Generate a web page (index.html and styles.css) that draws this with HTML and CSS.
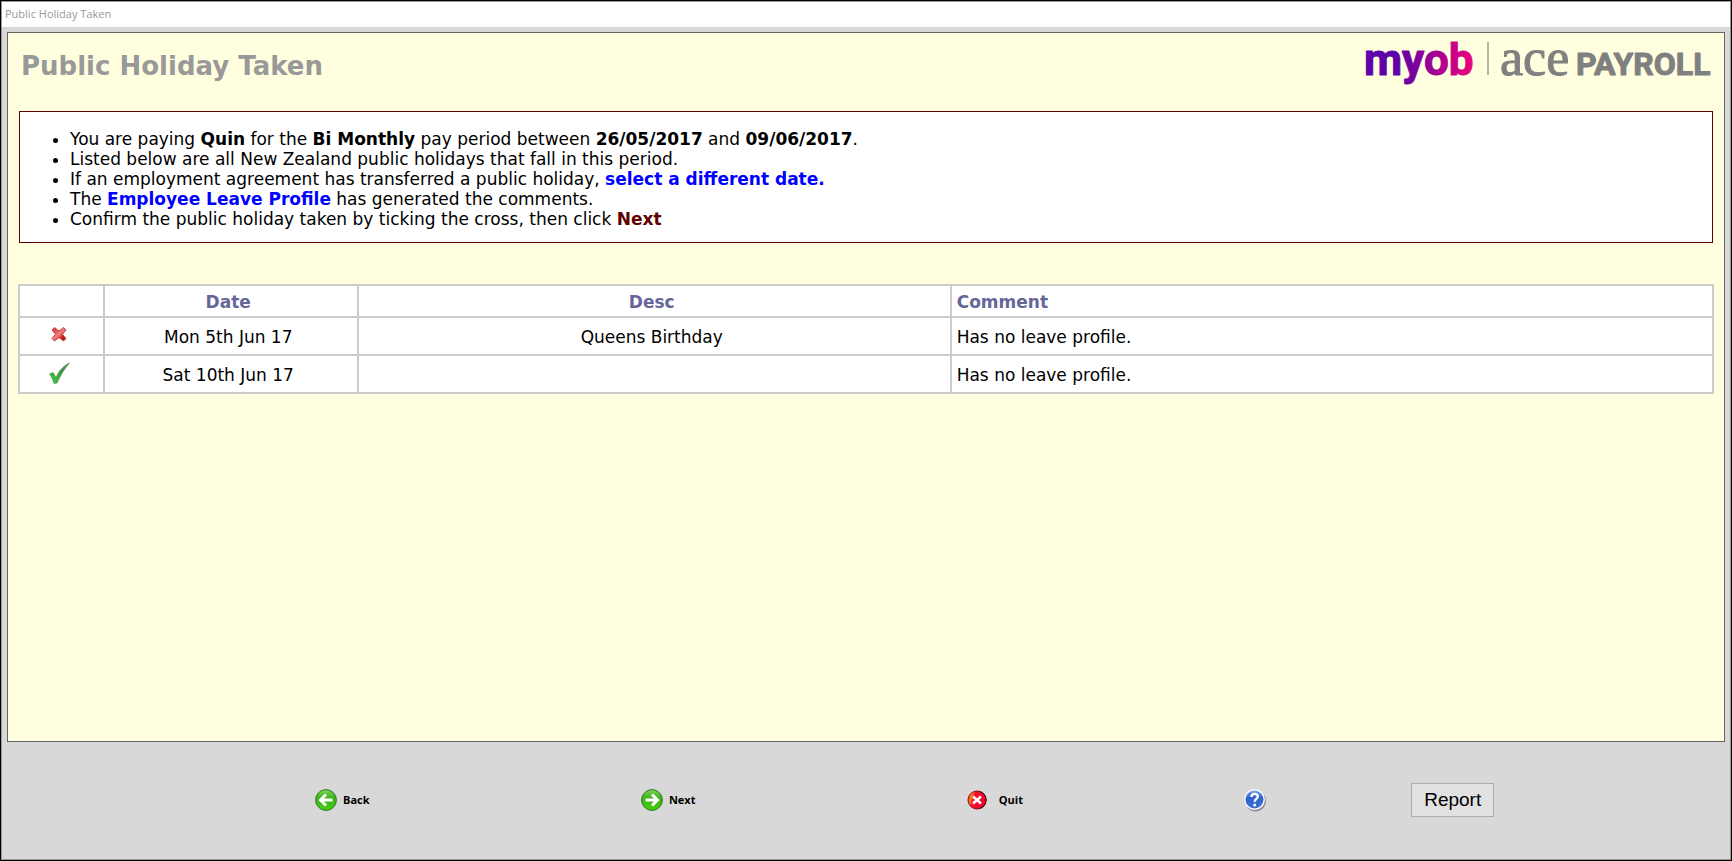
FILE: index.html
```
<!DOCTYPE html>
<html lang="en">

<head>
  <meta charset="UTF-8">
  <meta name="viewport" content="width=device-width, initial-scale=1.0">
  <title>Public Holiday Taken</title>

  <link rel="stylesheet" href="styles.css">
</head>

<body>
  <div class="window">
    <div class="titlebar">Public Holiday Taken</div>

    <main class="panel">
      <header class="page-header">
        <h1>Public Holiday Taken</h1>
        <svg class="logo" viewBox="0 0 350 48" role="img" aria-label="myob ace payroll">
          <defs>
            <linearGradient id="brand" gradientUnits="userSpaceOnUse" x1="0" y1="0" x2="112" y2="0">
              <stop offset="0.3" stop-color="#5f00a8" />
              <stop offset="0.6" stop-color="#9a0096" />
              <stop offset="1" stop-color="#f4007a" />
            </linearGradient>
          </defs>
          <text class="logo-myob" x="0" y="33">myob</text>
          <path d="M124 0v33" stroke="#b5b5a2" stroke-width="2" />
          <text class="logo-ace" x="136" y="33">ace</text>
          <text class="logo-payroll" x="212" y="33">PAYROLL</text>
        </svg>
      </header>

      <section class="notice">
        <ul>
          <li>You are paying <b>Quin</b> for the <b>Bi Monthly</b> pay period between <b>26/05/2017</b> and <b>09/06/2017</b>.</li>
          <li>Listed below are all New Zealand public holidays that fall in this period.</li>
          <li>If an employment agreement has transferred a public holiday, <a href="#date">select a different date.</a></li>
          <li>The <a href="#profile">Employee Leave Profile</a> has generated the comments.</li>
          <li>Confirm the public holiday taken by ticking the cross, then click <b class="next-word">Next</b></li>
        </ul>
      </section>

      <table class="holidays">
        <thead>
          <tr>
            <th class="col-tick"></th>
            <th class="col-date">Date</th>
            <th class="col-desc">Desc</th>
            <th class="col-comment">Comment</th>
          </tr>
        </thead>
        <tbody>
          <tr>
            <td>
              <button class="mark" aria-label="Not taken">
                <svg width="22" height="24" viewBox="0 0 22 24">
                  <defs>
                    <linearGradient id="cross" x1="0" y1="0" x2="1" y2="1">
                      <stop offset="0.2" stop-color="#e04848" />
                      <stop offset="0.5" stop-color="#ef8080" />
                      <stop offset="0.75" stop-color="#c81818" />
                    </linearGradient>
                  </defs>
                  <path d="M6.500 3.500L11 7L15.500 3.500L18 6L14.500 10.300L18 14.500L15.500 17L11 13.500L6.500 17L4 14.500L7.500 10.300L4 6Z" fill="url(#cross)" stroke="#c04848" stroke-linejoin="round" />
                </svg>
              </button>
            </td>
            <td>Mon 5th Jun 17</td>
            <td>Queens Birthday</td>
            <td class="comment">Has no leave profile.</td>
          </tr>
          <tr>
            <td>
              <button class="mark" aria-label="Taken">
                <svg width="22" height="24" viewBox="0 0 22 24">
                  <defs>
                    <linearGradient id="tick" x1="0" y1="1" x2="1" y2="0">
                      <stop offset="0.2" stop-color="#3cc038" />
                      <stop offset="0.6" stop-color="#3c9440" />
                      <stop offset="1" stop-color="#5a8a60" />
                    </linearGradient>
                  </defs>
                  <path d="M1.500 12L5 10.500L8 15.500C11 9 15 4 21.500 1C17 6 12.500 13 9 21L6 21.500C5 18 3.500 14.500 1.500 12Z" fill="url(#tick)" stroke="#3f8a44" stroke-width="0.600" />
                </svg>
              </button>
            </td>
            <td>Sat 10th Jun 17</td>
            <td></td>
            <td class="comment">Has no leave profile.</td>
          </tr>
        </tbody>
      </table>
    </main>

    <footer class="actions">
      <button class="action">
        <svg width="22" height="22" viewBox="0 0 22 22">
          <defs>
            <linearGradient id="green" x1="0" y1="0" x2="0" y2="1">
              <stop offset="0" stop-color="#7ed858" />
              <stop offset="0.4" stop-color="#3cb21c" />
              <stop offset="1" stop-color="#46d00c" />
            </linearGradient>
          </defs>
          <circle cx="11" cy="11" r="10.400" fill="url(#green)" stroke="#2a7a20" />
          <path d="M17.500 11H6M11 5.500L5.500 11L11 16.500" fill="none" stroke="#fff" stroke-width="3" />
        </svg>
        Back
      </button>
      <button class="action">
        <svg width="22" height="22" viewBox="0 0 22 22">
          <circle cx="11" cy="11" r="10.400" fill="url(#green)" stroke="#2a7a20" />
          <path d="M4.500 11H16M11 5.500L16.500 11L11 16.500" fill="none" stroke="#fff" stroke-width="3" />
        </svg>
        Next
      </button>
      <button class="action quit">
        <svg width="20" height="20" viewBox="0 0 20 20">
          <defs>
            <linearGradient id="red" x1="0" y1="0" x2="1" y2="0.300">
              <stop offset="0" stop-color="#e84000" />
              <stop offset="0.250" stop-color="#ff7a20" />
              <stop offset="0.400" stop-color="#f8102c" />
              <stop offset="1" stop-color="#f00030" />
            </linearGradient>
          </defs>
          <circle cx="10" cy="10" r="9" fill="url(#red)" stroke="#801008" />
          <path d="M13 1.500A9 9 0 0 1 13 18.500" fill="none" stroke="#300000" />
          <path d="M6 6.500L14 13.500M14 6.500L6 13.500" stroke="#fff" stroke-width="2.600" />
        </svg>
        Quit
      </button>
      <button class="action" aria-label="Help">
        <svg width="24" height="24" viewBox="0 0 24 24">
          <defs>
            <linearGradient id="blue" x1="0" y1="0" x2="0" y2="1">
              <stop offset="0" stop-color="#74a8ec" />
              <stop offset="0.400" stop-color="#2f62c8" />
              <stop offset="1" stop-color="#3a70e0" />
            </linearGradient>
          </defs>
          <circle cx="12.500" cy="13" r="10.500" fill="#8c8c90" />
          <circle cx="11.500" cy="11.500" r="10.500" fill="#f6f8fc" />
          <circle cx="11.500" cy="11.500" r="9" fill="url(#blue)" />
          <path d="M8.500 9C8.500 4.800 14.800 5 14.800 8.500C14.800 11 11.700 10.800 11.700 13.800" fill="none" stroke="#fff" stroke-width="2.400" />
          <circle cx="11.700" cy="17" r="1.500" fill="#fff" />
        </svg>
      </button>
      <button class="report">Report</button>
    </footer>
  </div>
</body>

</html>
```

FILE: styles.css
```
* {
  box-sizing: border-box;
}

body {
  background: #d8d8d8;
  font-family: Verdana, "DejaVu Sans", sans-serif;
  font-size: 17px;
  margin: 0;
}

button {
  cursor: pointer;
}

.window {
  border: 1px solid #000;
  box-shadow: inset 0 0 0 1px #999;
  display: flex;
  flex-direction: column;
  min-height: 100vh;
  padding: 1px;
}

.titlebar {
  background: #fff;
  color: #999;
  font-family: "Open Sans", sans-serif;
  font-size: 11px;
  height: 25px;
  line-height: 24px;
  padding-left: 3px;
}

.panel {
  background: #ffffdf;
  border: 1px solid #666;
  flex: 1;
  margin: 5px 5px 0;
  padding: 9px 10px;
}

.page-header {
  display: flex;
  justify-content: space-between;
}

h1 {
  color: #999;
  font-size: 26px;
  line-height: 48px;
  margin: 0 0 0 3px;
}

.logo {
  height: 48px;
  overflow: visible;
  width: 350px;
}

.logo text {
  stroke-linejoin: round;
}

.logo-myob {
  fill: url(#brand);
  font: bold 44px Roboto, sans-serif;
  stroke: url(#brand);
  stroke-width: 1px;
}

.logo-ace {
  fill: #808080;
  font: 52px "Liberation Serif", serif;
  stroke: #808080;
}

.logo-payroll {
  fill: #808080;
  font: bold 32px Roboto, sans-serif;
  stroke: #808080;
  stroke-width: 1px;
}

.notice {
  background: #fff;
  border: 1px solid #600000;
  line-height: 20px;
  margin: 21px 1px 0;
  padding: 17px 10px 13px;
}

.notice ul {
  margin: 0;
  padding-left: 40px;
}

.notice a {
  color: #00f;
  font-weight: bold;
  text-decoration: none;
}

.next-word {
  color: #600000;
}

.holidays {
  background: #fff;
  border-collapse: collapse;
  margin-top: 41px;
  table-layout: fixed;
  width: 100%;
}

.holidays th,
.holidays td {
  border: 2px solid #ccc;
  height: 38px;
  padding: 2px 10px 0 5px;
  text-align: center;
}

.holidays th {
  color: #669;
  height: 32px;
}

.holidays .col-tick {
  width: 5%;
}

.holidays .col-date {
  width: 15%;
}

.holidays .col-desc {
  width: 35%;
}

.holidays .col-comment,
.holidays .comment {
  text-align: left;
}

.mark {
  background: none;
  border: 0;
  display: block;
  margin: 0 auto;
  padding: 0 0 2px;
}

.mark svg {
  display: block;
}

.actions {
  align-items: center;
  display: grid;
  grid-template-columns: 46fr 46fr 39fr 24fr 45fr;
  height: 117px;
  justify-items: start;
  padding: 0 0 2px 18%;
}

.action {
  align-items: center;
  background: none;
  border: 0;
  display: flex;
  font: bold 11px "Open Sans", sans-serif;
  gap: 6px;
  padding: 0 2px;
}

.quit {
  gap: 12px;
}

.report {
  background: #e1e1e1;
  border: 1px solid #adadad;
  font: 19px "Liberation Sans", Arial, sans-serif;
  padding: 5px 12px;
}
```
